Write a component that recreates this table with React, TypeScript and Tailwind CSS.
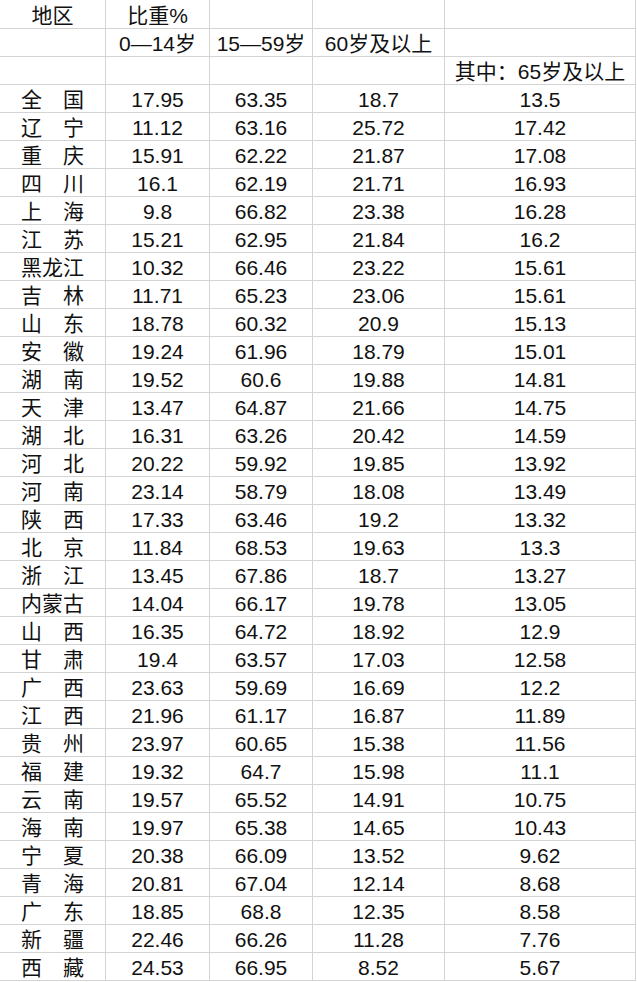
import React from 'react'

const rows: [string, string, string, string, string][] = [
  ['全　国', '17.95', '63.35', '18.7', '13.5'],
  ['辽　宁', '11.12', '63.16', '25.72', '17.42'],
  ['重　庆', '15.91', '62.22', '21.87', '17.08'],
  ['四　川', '16.1', '62.19', '21.71', '16.93'],
  ['上　海', '9.8', '66.82', '23.38', '16.28'],
  ['江　苏', '15.21', '62.95', '21.84', '16.2'],
  ['黑龙江', '10.32', '66.46', '23.22', '15.61'],
  ['吉　林', '11.71', '65.23', '23.06', '15.61'],
  ['山　东', '18.78', '60.32', '20.9', '15.13'],
  ['安　徽', '19.24', '61.96', '18.79', '15.01'],
  ['湖　南', '19.52', '60.6', '19.88', '14.81'],
  ['天　津', '13.47', '64.87', '21.66', '14.75'],
  ['湖　北', '16.31', '63.26', '20.42', '14.59'],
  ['河　北', '20.22', '59.92', '19.85', '13.92'],
  ['河　南', '23.14', '58.79', '18.08', '13.49'],
  ['陕　西', '17.33', '63.46', '19.2', '13.32'],
  ['北　京', '11.84', '68.53', '19.63', '13.3'],
  ['浙　江', '13.45', '67.86', '18.7', '13.27'],
  ['内蒙古', '14.04', '66.17', '19.78', '13.05'],
  ['山　西', '16.35', '64.72', '18.92', '12.9'],
  ['甘　肃', '19.4', '63.57', '17.03', '12.58'],
  ['广　西', '23.63', '59.69', '16.69', '12.2'],
  ['江　西', '21.96', '61.17', '16.87', '11.89'],
  ['贵　州', '23.97', '60.65', '15.38', '11.56'],
  ['福　建', '19.32', '64.7', '15.98', '11.1'],
  ['云　南', '19.57', '65.52', '14.91', '10.75'],
  ['海　南', '19.97', '65.38', '14.65', '10.43'],
  ['宁　夏', '20.38', '66.09', '13.52', '9.62'],
  ['青　海', '20.81', '67.04', '12.14', '8.68'],
  ['广　东', '18.85', '68.8', '12.35', '8.58'],
  ['新　疆', '22.46', '66.26', '11.28', '7.76'],
  ['西　藏', '24.53', '66.95', '8.52', '5.67'],
]

const header: [string, string, string, string, string][] = [
  ['地区', '比重%', '', '', ''],
  ['', '0—14岁', '15—59岁', '60岁及以上', ''],
  ['', '', '', '', '其中：65岁及以上'],
]

const widths = ['w-[106px]', 'w-[104px]', 'w-[103px]', 'w-[132px]', 'w-[191px]']

function Row({ cells, first }: { cells: string[]; first?: boolean }) {
  return (
    <div className={first ? 'flex h-[29px]' : 'flex h-[28px]'}>
      {cells.map((c, i) => (
        <div
          key={i}
          className={`${widths[i]} flex shrink-0 items-end justify-center overflow-visible whitespace-nowrap border-r border-b border-[#d4d4d4]`}
        >
          <span className="leading-[24px]">{c}</span>
        </div>
      ))}
    </div>
  )
}

export default function App() {
  return (
    <div
      className="min-h-[982px] w-[637px] bg-white text-[21px] text-[#111111]"
      style={{ fontFamily: '"Liberation Sans", "Noto Sans CJK SC", sans-serif' }}
    >
      {header.map((r, i) => (
        <Row key={`h${i}`} cells={r} first={i === 0} />
      ))}
      {rows.map((r) => (
        <Row key={r[0]} cells={r} />
      ))}
    </div>
  )
}
